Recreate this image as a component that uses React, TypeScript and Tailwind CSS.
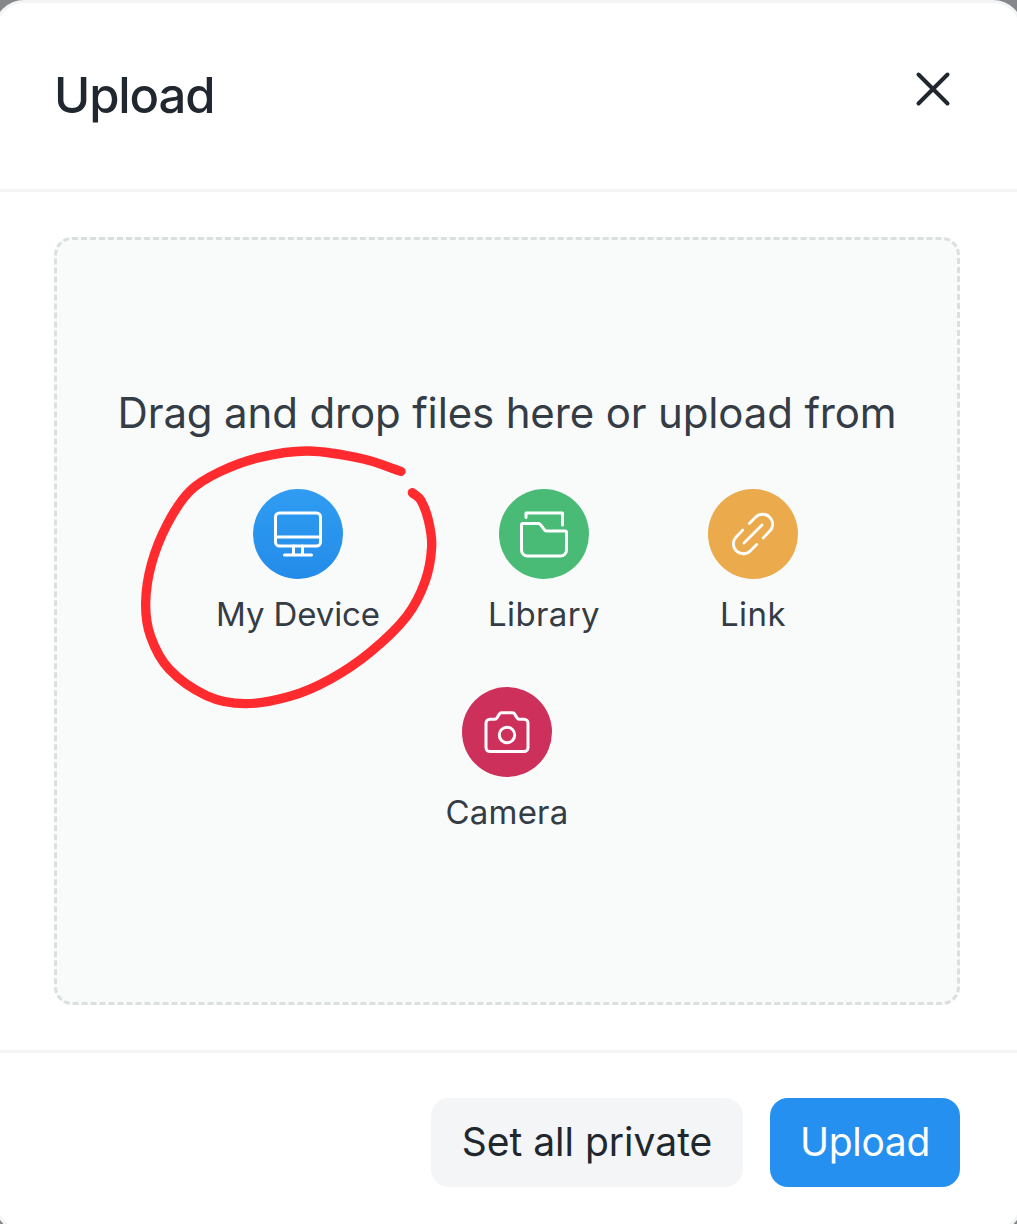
import type { ReactNode } from "react";

const stroke = {
  fill: "none",
  stroke: "currentColor",
  strokeWidth: 3,
  strokeLinecap: "round",
  strokeLinejoin: "round",
} as const;

function DeviceIcon() {
  return (
    <svg className="size-[90px]" viewBox="0 0 90 90" {...stroke}>
      <rect x="22.5" y="24" width="45" height="33" rx="4" />
      <path d="M22.5 48h45M40.5 57v9M49.5 57v9M31.5 66h27" />
    </svg>
  );
}

function LibraryIcon() {
  return (
    <svg className="size-[90px]" viewBox="0 0 90 90" {...stroke}>
      <path d="M27 28.500v-4.500h36.500v12" />
      <path d="M22.500 36a1.500 1.500 0 0 1 1.500-1.500h15.500q1.300 0 2 1.100l4 5.300q.7 1.100 2 1.100h18.500a1.500 1.500 0 0 1 1.500 1.500v17.500a6 6 0 0 1-6 6h-33a6 6 0 0 1-6-6z" />
    </svg>
  );
}

function LinkIcon() {
  return (
    <svg className="size-[90px]" viewBox="0 0 90 90" {...stroke} strokeWidth={2.8}>
      <path d="M41.300 34.600L47.800 28.100A9.900 9.900 0 0 1 61.800 42.100L55.300 48.900" />
      <path d="M48.700 55.400L42.200 61.900A9.900 9.900 0 0 1 28.200 47.900L34.700 41.100" />
      <path d="M36 54L54 36" />
    </svg>
  );
}

function CameraIcon() {
  return (
    <svg className="size-[90px]" viewBox="0 0 90 90" {...stroke}>
      <path d="M28 32.200h4.500q1.700 0 2.600-1.500l2.200-3.600q.7-1.300 2.200-1.300h11q1.500 0 2.200 1.300l2.200 3.600q.9 1.500 2.600 1.500H62a4 4 0 0 1 4 4V60.500a4 4 0 0 1-4 4H28a4 4 0 0 1-4-4V36.200a4 4 0 0 1 4-4z" />
      <circle cx="45" cy="48" r="7.700" />
    </svg>
  );
}

const loop: [number, number][] = [
  [813, 124], [700, 87], [535, 63], [390, 82], [270, 125], [180, 183], [113, 280],
  [65, 400], [47, 520], [62, 620], [118, 718], [230, 797], [345, 821], [480, 799],
  [600, 748], [720, 667], [830, 559], [885, 455], [905, 350], [895, 270], [872, 210], [847, 188],
];

// Smooth curve through every point, with tangents weighted by segment length.
function smooth(points: [number, number][]) {
  const length = (a: [number, number], b: [number, number]) => Math.hypot(b[0] - a[0], b[1] - a[1]);
  const tangent = (i: number) => {
    const a = points[Math.max(i - 1, 0)];
    const b = points[i];
    const c = points[Math.min(i + 1, points.length - 1)];
    const total = length(a, b) + length(b, c);
    return [(c[0] - a[0]) / total, (c[1] - a[1]) / total];
  };
  let d = `M${points[0].join(" ")}`;
  for (let i = 0; i < points.length - 1; i++) {
    const [x1, y1] = points[i];
    const [x2, y2] = points[i + 1];
    const [ax, ay] = tangent(i);
    const [bx, by] = tangent(i + 1);
    const k = length(points[i], points[i + 1]) / 2.9;
    d += `C${x1 + ax * k} ${y1 + ay * k} ${x2 - bx * k} ${y2 - by * k} ${x2} ${y2}`;
  }
  return d;
}

function Source({ label, color, spacing, children }: { label: string; color: string; spacing: string; children: ReactNode }) {
  return (
    <button className="flex flex-col items-center">
      <span className={`size-[90px] rounded-full text-white ${color}`}>{children}</span>
      <span className={`mt-[14px] whitespace-nowrap text-[33px] leading-[42px] ${spacing}`}>{label}</span>
    </button>
  );
}

export default function App() {
  return (
    <div className="h-[1224px] w-full overflow-hidden bg-[#85878a] font-['Inter',sans-serif] text-[#20272f]">
      <div className="-ml-[6px] flex h-[1232px] w-[1029px] flex-col rounded-[30px] border-[3px] border-[#f3f4f5] bg-white">
        <header className="flex h-[189px] shrink-0 items-start justify-between border-b-[3px] border-[#f3f4f5] pl-[57px] pr-[69px] pt-[64px]">
          <h1 className="text-[49px] font-medium leading-[58px] tracking-[-1.1px]">Upload</h1>
          <button aria-label="Close" className="mt-[4px]">
            <svg className="size-[36px]" viewBox="0 0 36 36" {...stroke} strokeWidth={4}>
              <path d="M3.500 3.500l29 29M32.500 3.500l-29 29" />
            </svg>
          </button>
        </header>

        <main className="h-[858px] shrink-0 px-[57px] pt-[45px]">
          <section className="relative flex h-[768px] w-[906px] flex-col items-center rounded-[18px] border-[3px] border-dashed border-[#dcdfe0] bg-[#f9fbfa] pt-[147px] text-[#343c46]">
            <p className="whitespace-nowrap text-[42px] leading-[51px] tracking-[-0.15px]">
              Drag and drop files here or upload from
            </p>
            <div className="mt-[51px] flex w-full justify-center">
              <div className="flex w-[246px] justify-center"><Source label="My Device" spacing="tracking-[-0.1px]" color="bg-linear-to-b from-[#309cf1] to-[#238cea]"><DeviceIcon /></Source></div>
              <div className="flex w-[246px] justify-center"><Source label="Library" spacing="tracking-[0.4px]" color="bg-[#49bb76]"><LibraryIcon /></Source></div>
              <div className="flex w-[172px] justify-center"><Source label="Link" spacing="tracking-[0.4px]" color="bg-[#ebaa4c]"><LinkIcon /></Source></div>
            </div>
            <div className="mt-[52px]">
              <Source label="Camera" spacing="tracking-[0.2px]" color="bg-[#cd305b]"><CameraIcon /></Source>
            </div>
            <svg className="pointer-events-none absolute left-[73px] top-[190px] h-[290px] w-[320px] text-[#ff2b2f]" viewBox="0 0 960 870" {...stroke} strokeWidth={28}>
              <path d={smooth(loop)} />
            </svg>
          </section>
        </main>

        <footer className="flex flex-1 items-start justify-end gap-[27px] border-t-[3px] border-[#f3f4f5] pr-[60px] pt-[45px]">
          <button className="h-[89px] w-[312px] rounded-[18px] bg-[#f4f5f7] text-[39px]">
            Set all private
          </button>
          <button className="h-[89px] w-[190px] rounded-[18px] bg-[#2590ef] text-[39px] tracking-[-0.3px] text-white">
            Upload
          </button>
        </footer>
      </div>
    </div>
  );
}
